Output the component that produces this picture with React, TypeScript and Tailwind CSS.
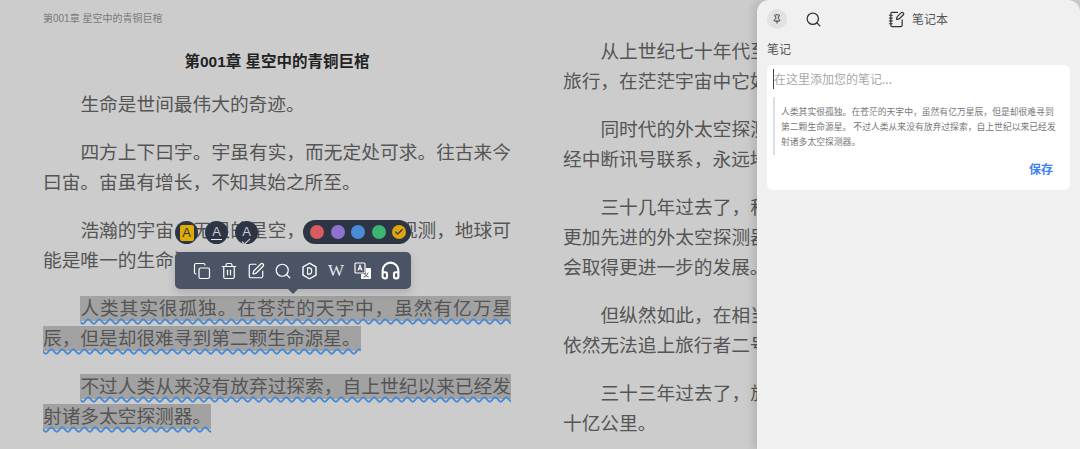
import React from 'react'
import { Check, Copy, Headphones, NotebookPen, Pin, Search, SquarePen, Trash2 } from 'lucide-react'

const leftParas = [
  '生命是世间最伟大的奇迹。',
  '四方上下曰宇。宇虽有实，而无定处可求。往古来今曰宙。宙虽有增长，不知其始之所至。',
  '浩瀚的宇宙，无垠的星空，目前人类的观测，地球可能是唯一的生命源星。',
]

const rightParas = [
  '从上世纪七十年代至今，探测器一直在太阳系外漫长旅行，在茫茫宇宙中它如一叶孤舟。',
  '同时代的外太空探测器有些早已失去了动力，有的已经中断讯号联系，永远地消失在了宇宙深处。',
  '三十几年过去了，科技不断进步，人类已经研制出了更加先进的外太空探测器，相信在未来的探索之中人类也会取得更进一步的发展。',
  '但纵然如此，在相当长的一段时间内，新的探测器也依然无法追上旅行者二号的脚步。',
  '三十三年过去了，旅行者二号距离地球已有一百四五十亿公里。',
]

function Para({ children }: { children: React.ReactNode }) {
  return <p className="mb-[18px] indent-[2em] text-justify">{children}</p>
}

function Marked({ children }: { children: React.ReactNode }) {
  return (
    <span className="bg-[#a2a2a2] py-[2px] text-[#555555] underline decoration-[#4a8bd6] decoration-wavy decoration-[1.5px] underline-offset-[3px] [box-decoration-break:clone]">
      {children}
    </span>
  )
}

function HexD() {
  return (
    <svg width="17" height="18" viewBox="0 0 17 18" fill="none" stroke="white" strokeWidth="1.4">
      <path d="M8.5 1.2 15 4.9v8.2l-6.5 3.7L2 13.1V4.9z" />
      <path d="M6.6 5.9h1.7c1.6 0 2.4 1.2 2.4 3.1s-.8 3.1-2.4 3.1H6.6z" strokeWidth="1.1" />
    </svg>
  )
}

function TranslateIcon() {
  return (
    <svg width="18" height="18" viewBox="0 0 18 18" fill="none">
      <rect x="1" y="1" width="10" height="10" rx="1" stroke="white" strokeWidth="1.2" />
      <path d="M3.8 8.6 6 3.2l2.2 5.4M4.6 6.9h2.8" stroke="white" strokeWidth="1.1" />
      <path d="M12 6h4.2A1 1 0 0 1 17 7v9a1 1 0 0 1-1 1H8a1 1 0 0 1-1-1v-4h4a1 1 0 0 0 1-1z" fill="white" />
      <path d="M9.5 15.2c2.4-.7 4-2.4 4.6-4.6M10.5 11.5c.7 1.6 2.2 3 4.2 3.7" stroke="#4a5464" strokeWidth="1" />
    </svg>
  )
}

function SelectionMenu() {
  return (
    <>
      {/* highlight styles */}
      <div className="absolute left-[175px] top-[221px] flex items-center gap-[7px]">
        <div className="flex h-[23px] w-[23px] items-center justify-center rounded-full bg-[#2d3545]">
          <span className="flex h-[16px] w-[14px] items-center justify-center rounded-[2px] bg-[#e0ac00] font-['Liberation_Sans',sans-serif] text-[13px] leading-none text-[#2d3545]">A</span>
        </div>
        <div className="flex h-[23px] w-[23px] flex-col items-center justify-center rounded-full bg-[#2d3545] font-['Liberation_Sans',sans-serif] text-[13px] leading-[13px] text-[#c8ccd4]">
          A<span className="mt-[1px] h-[1.5px] w-[11px] bg-[#e8e8e8]" />
        </div>
        <div className="relative flex h-[23px] w-[23px] items-center justify-center rounded-full bg-[#2d3545] pb-[3px] font-['Liberation_Sans',sans-serif] text-[13px] leading-none text-[#c8ccd4]">
          A
          <svg className="absolute -bottom-[1px] left-[6px]" width="12" height="7" viewBox="0 0 12 7" fill="none" stroke="#b8bcc4" strokeWidth="1.3">
            <path d="M1 3.5 3.5 6 9 1" />
          </svg>
        </div>
      </div>

      {/* colours */}
      <div className="absolute left-[303px] top-[220px] flex h-[24px] w-[108px] items-center gap-[6.5px] rounded-full bg-[#2d3545] pl-[7px]">
        <span className="h-[14px] w-[14px] rounded-full bg-[#d85c5e]" />
        <span className="h-[14px] w-[14px] rounded-full bg-[#8f72cf]" />
        <span className="h-[14px] w-[14px] rounded-full bg-[#4a8bd8]" />
        <span className="h-[14px] w-[14px] rounded-full bg-[#3bb56f]" />
        <span className="flex h-[14px] w-[14px] items-center justify-center rounded-full bg-[#dca60c]">
          <Check size={10} strokeWidth={3} color="#2d3545" />
        </span>
      </div>

      {/* actions */}
      <div className="absolute left-[175px] top-[252px] flex h-[37px] w-[236px] items-center gap-[9px] rounded-[5px] bg-[#4a5464] pl-[18px] text-white shadow-[0_4px_10px_rgba(0,0,0,0.15)]">
        <Copy size={18} strokeWidth={1.6} />
        <Trash2 size={18} strokeWidth={1.6} />
        <SquarePen size={18} strokeWidth={1.6} />
        <Search size={18} strokeWidth={1.6} />
        <HexD />
        <span className="w-[18px] text-center font-['Liberation_Serif',serif] text-[17px] leading-none text-[#e6e8ec]">W</span>
        <TranslateIcon />
        <Headphones size={21} strokeWidth={2.4} className="-ml-[1px]" />
        <span className="absolute -bottom-[5px] left-[113px] h-0 w-0 border-x-[5px] border-t-[5px] border-x-transparent border-t-[#4a5464]" />
      </div>
    </>
  )
}

function NotePanel() {
  return (
    <aside className="absolute bottom-0 right-0 top-0 w-[323px] rounded-t-xl bg-[#f0f0f0] px-[10px] font-['Noto_Sans_CJK_SC',sans-serif] shadow-[-4px_0_8px_rgba(0,0,0,0.12)]">
      <header className="relative flex h-[38px] items-center text-[#333]">
        <span className="flex h-[20px] w-[20px] items-center justify-center rounded-full bg-[#e2e2e2]">
          <Pin size={10} strokeWidth={2.2} />
        </span>
        <Search size={17} strokeWidth={1.8} className="ml-[18px]" />
        <div className="ml-[66px] flex items-center gap-[7px]">
          <NotebookPen size={17} strokeWidth={1.7} />
          <span className="text-[12px] text-[#555]">笔记本</span>
        </div>
      </header>
      <p className="mb-[7px] mt-[2px] h-[18px] text-[12px] leading-[18px] text-[#555]">笔记</p>
      <div className="flex h-[125px] flex-col rounded-[6px] bg-white px-[6px] pt-[4px]">
        <p className="h-[20px] border-l border-[#444] text-[12px] leading-[20px] text-[#a8a8a8]">在这里添加您的笔记...</p>
        <blockquote className="mt-[8px] h-[58px] border-l-2 border-[#dce0e8] pl-[6px] pr-[4px] pt-[7px] text-[8.8px] leading-[15px] text-[#777]">
          人类其实很孤独。在苍茫的天宇中，虽然有亿万星辰，但是却很难寻到第二颗生命源星。 不过人类从来没有放弃过探索，自上世纪以来已经发射诸多太空探测器。
        </blockquote>
        <div className="mt-[5px] pr-[11px] text-right text-[12px] font-bold leading-[18px] text-[#3b82f6]">保存</div>
      </div>
    </aside>
  )
}

export default function App() {
  return (
    <div className="relative h-[449px] w-[1080px] overflow-hidden bg-[#cccccc] font-['Liberation_Serif','Noto_Sans_CJK_SC',serif] text-[18.7px] leading-[30px] text-[#555555]">
      <div className="flex h-[37px] items-center pl-[43px] font-['Liberation_Sans','Noto_Sans_CJK_SC',sans-serif] text-[10px] text-[#7a7a7a]">
        第001章 星空中的青铜巨棺
      </div>
      <div className="flex gap-[52px] px-[43px]">
        <section className="w-[468px] shrink-0">
          <h1 className="mb-[13px] mt-[10px] text-center font-['Liberation_Sans','Noto_Sans_CJK_SC',sans-serif] text-[15.5px] font-bold text-[#222]">第001章 星空中的青铜巨棺</h1>
          {leftParas.map((t) => (
            <Para key={t}>{t}</Para>
          ))}
          <Para>
            <Marked>人类其实很孤独。在苍茫的天宇中，虽然有亿万星辰，但是却很难寻到第二颗生命源星。</Marked>
          </Para>
          <Para>
            <Marked>不过人类从来没有放弃过探索，自上世纪以来已经发射诸多太空探测器。</Marked>
          </Para>
        </section>
        <section className="w-[468px] shrink-0">
          {rightParas.map((t) => (
            <Para key={t}>{t}</Para>
          ))}
        </section>
      </div>
      <SelectionMenu />
      <NotePanel />
    </div>
  )
}
